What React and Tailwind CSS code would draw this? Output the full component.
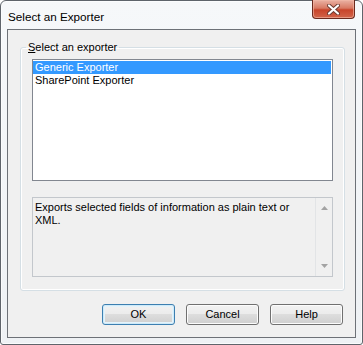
export default function App() {
  const btn =
    'w-[73px] h-[21px] rounded-[3px] border text-[11px] leading-[15px] text-black flex items-center justify-center';
  const grey =
    'border-[#707070] bg-[linear-gradient(#f2f2f2,#ebebeb_50%,#dddddd_50%,#cfcfcf)] shadow-[inset_0_0_0_1px_#fcfcfc]';

  return (
    <div className="w-[363px] h-[345px] overflow-hidden bg-white font-['Liberation_Sans',Arial,sans-serif]">
      <div className="w-full h-full flex flex-col rounded-t-[6px] rounded-b-[3px] border border-[#5f646b] bg-[linear-gradient(#f6f8fa,#eef1f4)] shadow-[inset_0_0_0_1px_#ffffffb0]">
        {/* Title bar */}
        <div className="h-[28px] flex items-start justify-between">
          <span className="pl-[7px] pt-[8px] text-[11.7px] leading-[15px] text-black">Select an Exporter</span>
          <button className="-mt-[1px] mr-[7px] w-[43px] h-[19px] rounded-b-[4px] border border-[#6b2a1e] border-t-0 bg-[linear-gradient(#eab2a4,#d87a64_45%,#c8442a_55%,#d2654a)] shadow-[inset_0_0_0_1px_#f2b9a8a0] flex items-center justify-center">
            <svg width="13" height="11" viewBox="0 0 13 11">
              <path d="M2 1.5 L11 9.5 M11 1.5 L2 9.5" stroke="#6a3a30" strokeWidth="4" strokeLinecap="round" />
              <path d="M2 1.5 L11 9.5 M11 1.5 L2 9.5" stroke="#ffffff" strokeWidth="2.2" strokeLinecap="round" />
            </svg>
          </button>
        </div>

        {/* Client area */}
        <div className="mx-[6px] mb-[6px] flex-1 border border-[#6d7177] bg-[#f0f0f0] flex flex-col">
          <fieldset className="mt-[10px] ml-[12px] mr-[10px] rounded-[3px] border border-[#d5dfe5] shadow-[inset_0_0_0_1px_#ffffff] px-0 pb-[13px]">
            <legend className="ml-[5px] px-[2px] text-[11px] leading-[15px] text-black">
              <u>S</u>elect an exporter
            </legend>
            <div className="mx-[11px] mt-[4px] flex flex-col">
              {/* List box */}
              <div className="h-[122px] border border-[#828790] bg-white pt-[1px] pr-[1px]">
                <div className="h-[13px] bg-[#3399ff] pl-[2px] text-[11px] leading-[13px] text-white">Generic Exporter</div>
                <div className="h-[13px] pl-[2px] text-[11px] leading-[13px] text-black">SharePoint Exporter</div>
              </div>

              {/* Description */}
              <div className="mt-[16px] h-[80px] border border-[#c3c7cc] bg-[#f0f0f0] flex">
                <p className="flex-1 pl-[2px] pt-[3px] text-[11px] leading-[13px] text-black">
                  Exports selected fields of information as plain text or XML.
                </p>
                <div className="w-[17px] border-l border-[#e2e4e6] flex flex-col items-center justify-between pt-[8px] pb-[8px]">
                  <svg width="7" height="4" viewBox="0 0 7 4">
                    <path d="M0 4 L3.5 0 L7 4 Z" fill="#a3a3a3" />
                  </svg>
                  <svg width="7" height="4" viewBox="0 0 7 4">
                    <path d="M0 0 L7 0 L3.5 4 Z" fill="#a3a3a3" />
                  </svg>
                </div>
              </div>
            </div>
          </fieldset>

          {/* Buttons */}
          <div className="mt-[13px] pr-[12px] flex justify-end gap-[11px]">
            <button className={`${btn} border-[#3c7fb1] bg-[linear-gradient(#f2f2f2,#ebebeb_50%,#dddddd_50%,#cfcfcf)] shadow-[inset_0_0_0_1px_#cfeaf8,inset_0_0_0_2px_#e4f3fb]`}>OK</button>
            <button className={`${btn} ${grey}`}>Cancel</button>
            <button className={`${btn} ${grey}`}>Help</button>
          </div>
        </div>
      </div>
    </div>
  );
}
